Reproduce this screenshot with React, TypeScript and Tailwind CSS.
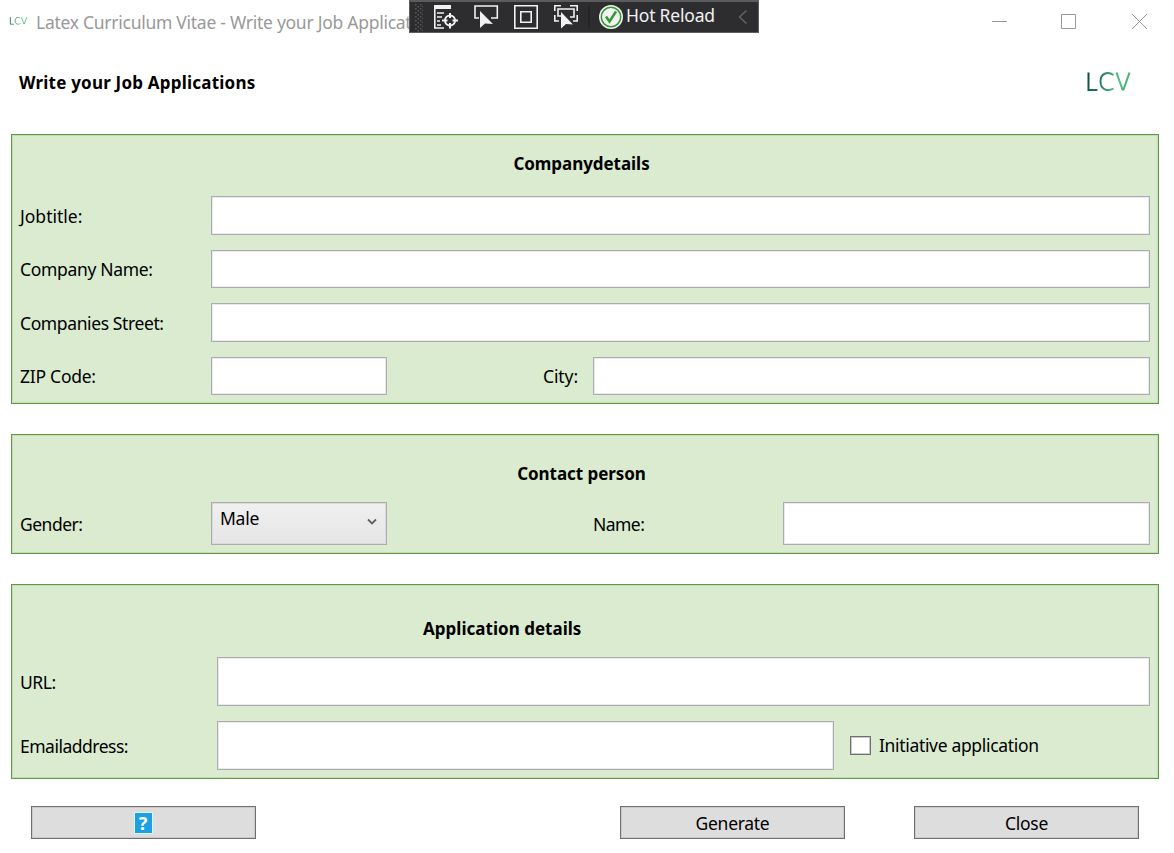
import type { ReactNode } from 'react';

const panel = 'ml-[11px] w-[1148px] border border-[#5f9b41] bg-[#daebd0] shadow-[inset_0_0_0_1px_#c5dcb8]';
const field = 'border border-[#abadb3] bg-white shadow-[inset_0_0_0_1px_#e9eaec] outline-none';
const button =
  'flex h-[33px] w-[225px] items-center justify-center border border-[#707070] bg-[#dddddd] shadow-[inset_0_0_0_1px_#c9c9c9]';

function Label({ className, children }: { className: string; children: ReactNode }) {
  return <div className={`shrink-0 whitespace-nowrap leading-6 ${className}`}>{children}</div>;
}

function Logo({ className, id }: { className: string; id: string }) {
  return (
    <svg className={className} viewBox="0 0 44 20" fill="none" stroke={`url(#${id})`} strokeWidth="2">
      <defs>
        <linearGradient id={id} gradientUnits="userSpaceOnUse" x1="0" y1="2" x2="40" y2="14">
          <stop offset="0" stopColor="#07483a" />
          <stop offset="0.45" stopColor="#348b6a" />
          <stop offset="0.8" stopColor="#55c28a" />
          <stop offset="1" stopColor="#42ad76" />
        </linearGradient>
      </defs>
      <path d="M1.500 0.5V18H10.500" />
      <path d="M26.500 3C20.500 -1 13.500 1.500 13.500 9.500C13.500 17.500 20.500 20 26.500 16.500" />
      <path d="M29.500 .5L35.500 17.500H36.500L42.500 .5" />
    </svg>
  );
}

function DebugToolbar() {
  return (
    <div className="absolute left-[409px] top-0 flex h-[33px] w-[350px] border border-t-2 border-[#5b5c5e] bg-[#2d2d30]">
      <svg className="h-[31px] w-[348px]" viewBox="410 1 348 31" fill="none">
        <g fill="#58585b">
          {[3, 7, 11, 15, 19, 23, 27].map((y) => (
            <g key={y}>
              <rect x="415" y={y} width="1.5" height="1.5" />
              <rect x="420" y={y} width="1.5" height="1.5" />
              <rect x="417.5" y={y + 2} width="1.5" height="1.5" />
              <rect x="422" y={y + 2} width="1" height="1" />
            </g>
          ))}
        </g>
        <g stroke="#f1f1f1" strokeWidth="1.6">
          <path d="M434 4H451V8H434Z" fill="#f1f1f1" stroke="none" />
          <path d="M434.8 8V27H444M437 12H444M437 16H442M437 20H440M437 24H441" />
          <circle cx="450" cy="19.5" r="5" strokeWidth="2" />
          <path d="M450 12V17M450 22V27.5M442 19.5H447.5M452.5 19.5H458" strokeWidth="2" />
          <path d="M479 17H475V5H497.300V17H491" />
          <path d="M480 10V27L485 22.500L493 23Z" fill="#f1f1f1" stroke="none" />
          <path d="M514.800 4.800H537.200V27.200H514.800Z M520.800 10.800H531.200V21.200H520.800Z" />
          <path d="M554.800 10V4.800H561M570 4.800H577.200V10M554.800 14V20H559M577.200 14V20H573M561 15H558V8H574V16H570" />
          <path d="M561 11V27.500L566 23L573 23.500Z" fill="#f1f1f1" stroke="none" />
        </g>
        <path d="M589 5V27" stroke="#222224" strokeWidth="1.5" />
        <circle cx="611" cy="16" r="12" fill="#f1f1f1" />
        <circle cx="611" cy="16" r="9.700" stroke="#339933" strokeWidth="1.500" />
        <path d="M606 15.500L609.500 20.500L616 10.500" stroke="#339933" strokeWidth="2.500" />
        <path d="M746.500 9.500L739.500 16L746.500 22.500" stroke="#68686a" strokeWidth="1.300" />
      </svg>
      <span className="absolute left-[216px] top-0 whitespace-nowrap text-[17.5px] leading-[27px] tracking-[-0.2px] text-[#f1f1f1]">
        Hot Reload
      </span>
    </div>
  );
}

function TitleBar() {
  return (
    <div className="relative flex h-[44px]">
      <Logo id="logoSmall" className="ml-[9px] mt-[17px] h-[8px] w-[19px]" />
      <div className="ml-[8px] mt-[10px] whitespace-nowrap text-[17.5px] leading-6 tracking-[-0.27px] text-[#999999]">
        Latex Curriculum Vitae - Write your Job Applications
      </div>
      <svg className="ml-auto mr-[26px] mt-[13px] h-4 w-[157px]" viewBox="0 0 157 16" fill="none" stroke="#999999">
        <path d="M1 8.500H16M70.500 1.500H84.500V15.500H70.500ZM141 1L156 16M156 1L141 16" />
      </svg>
      <DebugToolbar />
    </div>
  );
}

export default function App() {
  return (
    <div className="h-[853px] w-[1174px] overflow-hidden bg-white font-['Noto_Sans',sans-serif] text-[17.5px] text-black">
      <TitleBar />

      <header className="flex h-[90px] justify-between pl-[19px] pr-[43px]">
        <h1 className="mt-[27px] whitespace-nowrap text-[17px] font-bold leading-6 tracking-[0.21px]">
          Write your Job Applications
        </h1>
        <Logo id="logoLarge" className="mt-[28px] h-5 w-[44px]" />
      </header>

      <section className={`${panel} h-[270px] pl-2 pr-2`}>
        <h2 className="flex h-[61px] justify-center pr-[7px] pt-[17px] text-[17px] font-bold leading-6">
          <span className="tracking-[-0.05px]">Companydetails</span>
        </h2>
        <div className="flex h-[54px]">
          <Label className="w-[191px] pt-[8px] tracking-[0px]">Jobtitle:</Label>
          <input className={`${field} h-[39px] w-[939px]`} />
        </div>
        <div className="flex h-[53px]">
          <Label className="w-[191px] pt-[7px] tracking-[-0.33px]">Company Name:</Label>
          <input className={`${field} h-[38px] w-[939px]`} />
        </div>
        <div className="flex h-[54px]">
          <Label className="w-[191px] pt-[8px] tracking-[-0.39px]">Companies Street:</Label>
          <input className={`${field} h-[39px] w-[939px]`} />
        </div>
        <div className="flex h-[38px]">
          <Label className="w-[191px] pt-[7px] tracking-[-0.25px]">ZIP Code:</Label>
          <input className={`${field} h-[38px] w-[176px]`} />
          <Label className="ml-[156px] w-[50px] pt-[7px] tracking-[-0.1px]">City:</Label>
          <input className={`${field} h-[38px] w-[557px]`} />
        </div>
      </section>

      <section className={`${panel} mt-[30px] h-[120px] pl-2 pr-2`}>
        <h2 className="flex h-[67px] justify-center pr-[7px] pt-[27px] text-[17px] font-bold leading-6">
          <span className="tracking-[-0.05px]">Contact person</span>
        </h2>
        <div className="flex h-[43px]">
          <Label className="w-[191px] pt-[10px] tracking-[-0.5px]">Gender:</Label>
          <button className="flex h-[43px] w-[176px] justify-between border border-[#acacac] bg-linear-to-b from-[#f0f0f0] to-[#e5e5e5] pl-2 pr-[9px] pt-[3px] shadow-[inset_0_0_0_1px_#dadada]">
            <span className="leading-6 tracking-[-0.25px]">Male</span>
            <svg className="mt-[12px] h-[8px] w-[10px]" viewBox="0 0 10 8" fill="none" stroke="#606060" strokeWidth="1.8">
              <path d="M1 1.500L5 5.500L9 1.500" />
            </svg>
          </button>
          <Label className="ml-[205px] w-[191px] pl-px pt-[10px] tracking-[-0.55px]">Name:</Label>
          <input className={`${field} h-[43px] w-[367px]`} />
        </div>
      </section>

      <section className={`${panel} mt-[30px] h-[195px] pl-2 pr-2`}>
        <h2 className="flex h-[72px] pl-[403px] pt-[32px] text-[17px] font-bold leading-6">
          <span className="tracking-[0.02px]">Application details</span>
        </h2>
        <div className="flex h-[64px]">
          <Label className="w-[197px] pt-[13px] tracking-[-0.45px]">URL:</Label>
          <input className={`${field} h-[49px] w-[933px]`} />
        </div>
        <div className="flex h-[49px]">
          <Label className="w-[197px] pt-[13px] tracking-[-0.5px]">Emailaddress:</Label>
          <input className={`${field} h-[49px] w-[617px]`} />
          <label className="ml-4 flex pt-[12px]">
            <span className="mt-[3px] h-[19px] w-[21px] border border-[#707070] bg-white shadow-[inset_0_0_0_1px_#c9c9c9]" />
            <span className="ml-[8px] whitespace-nowrap leading-6 tracking-[-0.33px]">Initiative application</span>
          </label>
        </div>
      </section>

      <footer className="mt-[27px] flex pl-[31px]">
        <button className={button}>
          <span className="mr-px flex h-[22px] w-[19px] items-center justify-center border border-[#dff1fa] bg-[#1ba1e2] text-[18px] font-bold leading-5 text-white">
            ?
          </span>
        </button>
        <button className={`${button} ml-[364px] pt-[2px]`}>
          <span className="tracking-[-0.3px]">Generate</span>
        </button>
        <button className={`${button} ml-[69px] pt-[2px]`}>
          <span className="tracking-[-0.25px]">Close</span>
        </button>
      </footer>
    </div>
  );
}
